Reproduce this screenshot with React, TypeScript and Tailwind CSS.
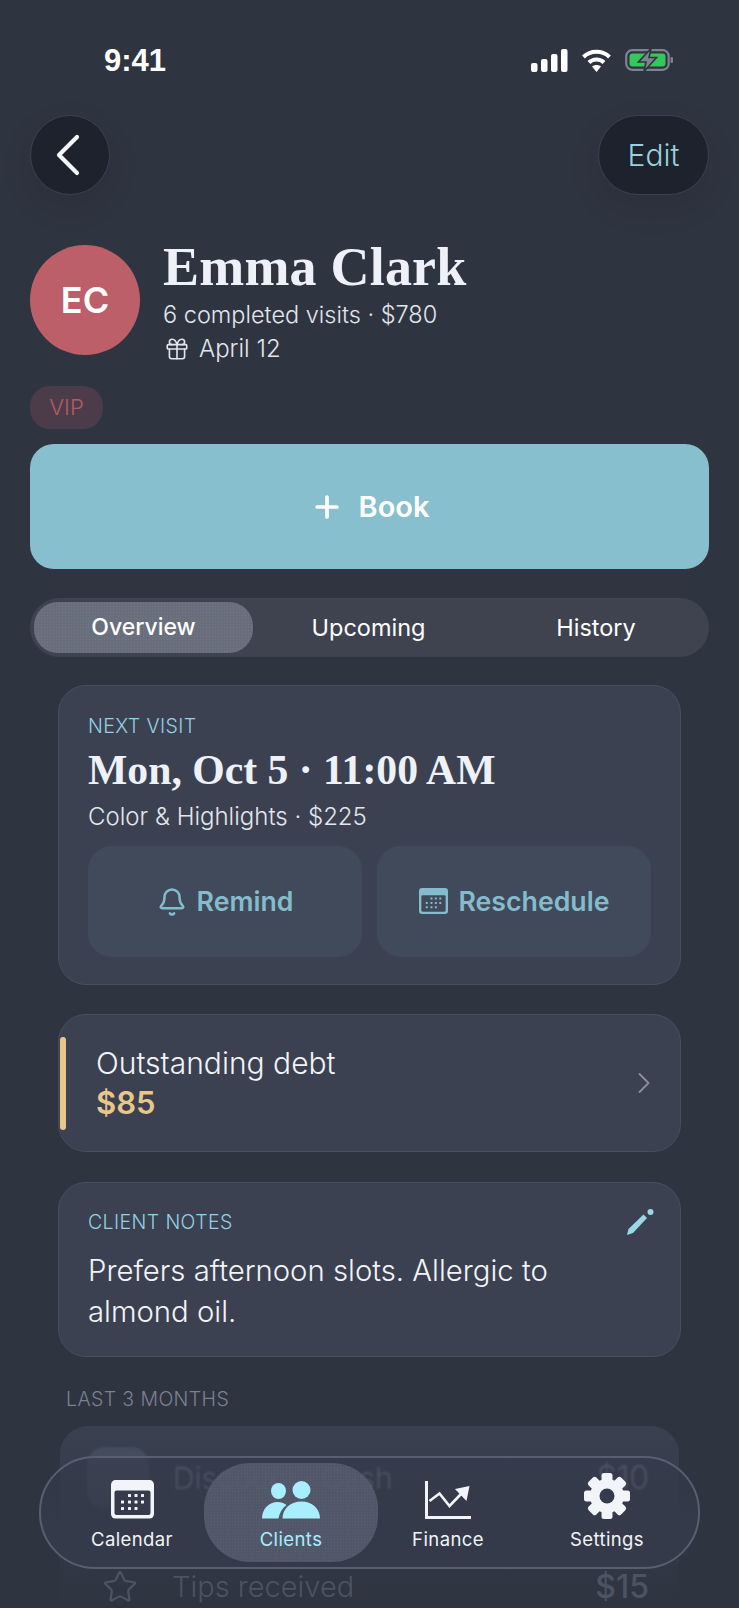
import { Bell, ChevronLeft, ChevronRight, Gift, Plus, Star } from "lucide-react"

const serif = { fontFamily: '"Liberation Serif", serif' }

const StatusIcons = () => (
  <div className="flex items-center gap-[13px]">
    <svg width="37" height="23" viewBox="0 0 37 23" fill="#fff">
      <rect x="0" y="14" width="6.5" height="9" rx="2" />
      <rect x="10" y="10" width="6.5" height="13" rx="2" />
      <rect x="20" y="5" width="6.5" height="18" rx="2" />
      <rect x="30" y="0" width="6.5" height="23" rx="2" />
    </svg>
    <svg width="31" height="23" viewBox="0 0 30 23" fill="none" stroke="#fff" strokeWidth="4">
      <path d="M2 8 C9 1 21 1 28 8" />
      <path d="M7.5 13.5 C11.5 9.5 18.5 9.5 22.5 13.5" />
      <path d="M15 23 L10.5 17.5 C13 15.5 17 15.5 19.5 17.5 Z" fill="#fff" stroke="none" />
    </svg>
    <svg width="49" height="24" viewBox="0 0 49 24">
      <rect x="1.2" y="2.2" width="42.5" height="19.6" rx="6" fill="none" stroke="#7d8390" strokeWidth="2.2" />
      <rect x="4.5" y="5.5" width="36" height="13" rx="3" fill="#34c759" />
      <rect x="45.5" y="9" width="2.5" height="6" rx="1.2" fill="#7d8390" />
      <path d="M26 0.5 L13.5 14 H21 L19 23.5 L31.5 9.5 H24 Z" fill="#7d8390" stroke="#2f3441" strokeWidth="1.6" />
    </svg>
  </div>
)

const ScheduleIcon = ({ color, dark, width }: { color: string; dark: string; width: number }) => (
  <svg width={width} height={width * 0.9} viewBox="0 0 43 38.5">
    <rect x="0" y="0" width="43" height="38.5" rx="4.5" fill={color} />
    <rect x="3.5" y="10.5" width="36" height="24.5" rx="2" fill={dark} />
    {[17, 23.5, 30].map((x) => <rect key={x} x={x} y="14" width="3" height="3" rx="0.5" fill={color} />)}
    {[10, 17, 23.5, 30].map((x) => <rect key={x} x={x} y="20.5" width="3" height="3" rx="0.5" fill={color} />)}
    {[10, 17, 23.5].map((x) => <rect key={x} x={x} y="27" width="3" height="3" rx="0.5" fill={color} />)}
  </svg>
)

const ClientsIcon = () => (
  <svg width="58" height="38" viewBox="0 0 58 38" fill="#a9eeff">
    <ellipse cx="16.5" cy="10" rx="7.5" ry="8" />
    <ellipse cx="39.5" cy="9" rx="9" ry="9" />
    <path d="M0 37.5 C0 28 7 21 15.5 21 C19 21 22 22 24.5 24 C20 27.5 17.5 32 16.5 37.5 Z" />
    <path d="M20.5 37.5 C20.5 27.5 28.5 20.5 39.5 20.5 C50 20.5 58 27.5 58 37.5 Z" />
  </svg>
)

const FinanceIcon = () => (
  <svg width="46" height="38" viewBox="0 0 46 38" fill="none" stroke="#f1f4f8">
    <path d="M1.5 0 V36.5 H46" strokeWidth="3" />
    <path d="M4.5 20 L14.5 12.5 L24.5 25 L36 13" strokeWidth="2.6" />
    <path d="M30 8 L44.5 5 L41.5 20 Z" fill="#f1f4f8" stroke="none" />
  </svg>
)

const GearIcon = () => (
  <svg width="46" height="46" viewBox="0 0 46 46">
    {[0, 45, 90, 135, 180, 225, 270, 315].map((a) => (
      <rect key={a} x="17.5" y="0" width="11" height="12" rx="2.5" fill="#f1f4f8" transform={`rotate(${a} 23 23)`} />
    ))}
    <circle cx="23" cy="23" r="17" fill="#f1f4f8" />
    <circle cx="23" cy="23" r="7.5" fill="#353b4a" />
  </svg>
)

const NavItem = ({ icon, label, active, className }: { icon: React.ReactNode; label: string; active?: boolean; className: string }) => (
  <div className={`flex flex-col items-center ${className}`}>
    <div className="flex h-[50px] items-end justify-center">{icon}</div>
    <span className={`mt-[8px] text-[18.5px] font-normal leading-[24px] tracking-[0.4px] ${active ? "text-[#a9eeff]" : "text-[#f1f4f8]"}`}>{label}</span>
  </div>
)

export default function App() {
  return (
    <div className="relative h-[1608px] w-[739px] overflow-hidden bg-[#2f3441] font-['Inter',sans-serif] text-white">
      {/* status bar */}
      <div className="flex h-[115px] items-start justify-between pl-[104px] pr-[65px] pt-[44px]">
        <span className="font-['Liberation_Sans',sans-serif] text-[31px] font-bold leading-[34px]">9:41</span>
        <div className="pt-[4px]"><StatusIcons /></div>
      </div>

      <div className="flex justify-between px-[30px]">
        <button className="flex h-[80px] w-[80px] items-center justify-center rounded-full border border-[#3a4150] bg-[#1d222d] shadow-[0_12px_24px_10px_rgba(0,0,0,0.05)]">
          <ChevronLeft size={72} strokeWidth={1.4} className="mr-[4px] shrink-0 text-[#f4f6f9]" />
        </button>
        <button className="flex h-[80px] w-[111px] items-center justify-center rounded-[40px] border border-[#3a4150] bg-[#1d222d] text-[30px] font-light text-[#9ad0df] shadow-[0_12px_24px_10px_rgba(0,0,0,0.05)]">
          Edit
        </button>
      </div>

      <div className="mt-[50px] flex h-[110px] gap-[23px] px-[30px]">
        <div className="flex h-[110px] w-[110px] shrink-0 items-center justify-center rounded-full bg-[#bc5f69] text-[36px] font-semibold">EC</div>
        <div className="-mt-[10px]">
          <h1 className="text-[54px] font-bold leading-[64px] tracking-[0.2px] text-[#eef2f8]" style={serif}>Emma Clark</h1>
          <p className="mt-[1px] text-[23.5px] font-light leading-[30px] text-[#e2e6ed]">6 completed visits · $780</p>
          <div className="mt-[4px] flex items-center gap-[9px] pl-[1px] text-[24px] font-light leading-[30px] text-[#e2e6ed]">
            <Gift size={26} strokeWidth={1.5} />
            April 12
          </div>
        </div>
      </div>

      <div className="ml-[30px] mt-[31px] flex h-[43px] w-[73px] items-center justify-center rounded-[20px] bg-[#4c3c49] text-[22px] font-light text-[#b05c68]">VIP</div>

      <button className="mx-[30px] mt-[15px] flex h-[125px] w-[679px] items-center justify-center gap-[15px] rounded-[24px] bg-[#88bfcf] text-[29px] font-semibold">
        <Plus size={34} strokeWidth={2.6} />
        Book
      </button>

      <div className="mx-[30px] mt-[29px] flex h-[59px] items-center rounded-[30px] bg-[#3f4350] pl-[4px] text-[23.5px] font-normal">
        <div className="flex h-[51px] w-[219px] items-center justify-center rounded-[24px] bg-[#696e7c] bg-[radial-gradient(rgba(255,255,255,0.07)_1px,transparent_1px)] bg-[length:3px_3px] text-[23px] font-medium">Overview</div>
        <div className="flex w-[231px] justify-center">Upcoming</div>
        <div className="flex w-[224px] justify-center">History</div>
      </div>

      <div className="mx-[58px] mt-[28px] h-[300px] rounded-[28px] border border-[#474e5e] bg-[#3b4151] px-[29px] pt-[28px]">
        <div className="text-[19.5px] font-light leading-[24px] tracking-[0.4px] text-[#94d2e2]">NEXT VISIT</div>
        <div className="mt-[8px] text-[41.7px] font-bold leading-[48px] text-[#eef2f8]" style={serif}>Mon, Oct 5 · 11:00 AM</div>
        <div className="mt-[8px] text-[24px] font-light leading-[30px] text-[#e2e6ed]">Color &amp; Highlights · $225</div>
        <div className="mt-[14px] flex gap-[15px]">
          <button className="flex h-[111px] w-[275px] items-center justify-center gap-[10px] rounded-[24px] bg-[#414a5b] text-[26.7px] font-semibold text-[#84bccd]">
            <Bell size={30} strokeWidth={2} />
            Remind
          </button>
          <button className="flex h-[111px] w-[275px] items-center justify-center gap-[11px] rounded-[24px] bg-[#414a5b] text-[26.7px] font-semibold text-[#84bccd]">
            <ScheduleIcon color="#84bccd" dark="#414a5b" width={29} />
            Reschedule
          </button>
        </div>
      </div>

      <div className="relative mx-[58px] mt-[29px] flex h-[138px] items-center justify-between rounded-[28px] border border-[#474e5e] bg-[#3b4151] pl-[37px] pr-[18px]">
        <div className="absolute left-[1px] top-[22px] h-[93px] w-[6px] rounded-[3px] bg-[#e8c88a]" />
        <div>
          <div className="text-[30px] font-light leading-[40px] text-[#f1f4f8]">Outstanding debt</div>
          <div className="text-[31px] font-semibold leading-[40px] text-[#e8c88a]">$85</div>
        </div>
        <ChevronRight size={36} strokeWidth={1.2} className="text-[#8a8f9b]" />
      </div>

      <div className="relative mx-[58px] mt-[30px] h-[175px] rounded-[28px] border border-[#474e5e] bg-[#3b4151] px-[29px] pt-[27px]">
        <div className="text-[19.5px] font-light leading-[24px] tracking-[0.4px] text-[#94d2e2]">CLIENT NOTES</div>
        <svg width="28" height="28" viewBox="0 0 28 28" fill="#9ad8e6" className="absolute right-[26px] top-[25px]">
          <path d="M1 27 L2.5 21 L17.5 6.5 L21 10 L7 25 Z" />
          <circle cx="24.5" cy="4" r="3" />
        </svg>
        <p className="mt-[16px] w-[500px] text-[29.3px] font-light leading-[41px] text-[#f1f4f8]">Prefers afternoon slots. Allergic to almond oil.</p>
      </div>

      <div className="ml-[66px] mt-[30px] text-[19.5px] font-light leading-[24px] tracking-[0.4px] text-[#7b8190]">LAST 3 MONTHS</div>

      <div className="mx-[60px] mt-[15px] h-[300px] rounded-[28px] bg-linear-to-b from-[#3a4050] to-[#2f3441] to-60% px-[27px]">
        <div className="flex items-center justify-between pr-[3px] pt-[21px]">
          <div className="flex items-center gap-[24px]">
            <div className="h-[62px] w-[62px] rounded-[18px] bg-[#454c5d] blur-[1px]" />
            <span className="text-[30px] font-light leading-[36px] text-[#7a8298] blur-[1.2px]">Discount · Cash</span>
          </div>
          <span className="text-[32px] font-light leading-[36px] text-[#7a8298] blur-[1.2px]">$10</span>
        </div>
        <div className="mt-[60px] flex items-center justify-between pr-[3px]">
          <div className="flex items-center gap-[34px] pl-[15px]">
            <Star size={36} strokeWidth={1.5} className="text-[#4c5363]" />
            <span className="text-[29px] font-light leading-[36px] text-[#4c5363]">Tips received</span>
          </div>
          <span className="text-[32px] font-medium leading-[36px] text-[#4c5363]">$15</span>
        </div>
      </div>

      {/* floating tab bar */}
      <nav className="absolute left-[39px] top-[1456px] flex h-[113px] w-[661px] items-center rounded-[56px] border-2 border-[#566071] bg-linear-to-b from-[#343a49]/60 via-[#343a49]/75 via-40% to-[#343a49] to-60% pb-[6px]">
        <div className="absolute left-[163px] top-[5px] h-[99px] w-[174px] rounded-[46px] bg-[#545b6c]/90 bg-[radial-gradient(rgba(255,255,255,0.05)_1px,transparent_1px)] bg-[length:3px_3px]" />
        <NavItem className="relative ml-[46px] w-[90px]" label="Calendar" icon={<ScheduleIcon color="#f1f4f8" dark="#353b4a" width={43} />} />
        <NavItem className="relative ml-[69px] w-[90px]" active label="Clients" icon={<ClientsIcon />} />
        <NavItem className="relative ml-[67px] w-[90px]" label="Finance" icon={<FinanceIcon />} />
        <NavItem className="relative ml-[69px] w-[90px]" label="Settings" icon={<GearIcon />} />
      </nav>
    </div>
  )
}
